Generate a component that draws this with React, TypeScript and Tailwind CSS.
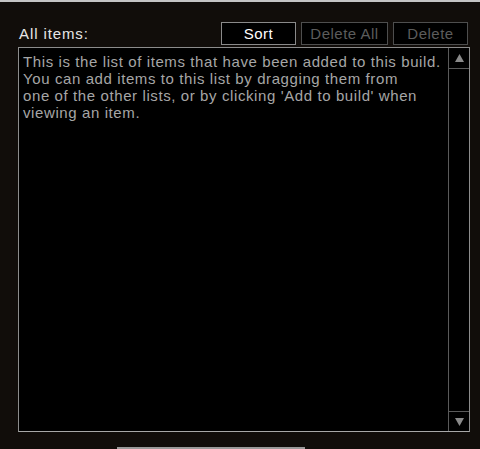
export default function App() {
  return (
    <div
      className="w-[480px] h-[449px] bg-[#110d0a] overflow-hidden flex flex-col"
      style={{ fontFamily: '"Liberation Sans", Arial, sans-serif' }}
    >
      <div className="h-[2px] bg-[#c4c4c4]" />
      <div className="flex items-center h-[23px] mt-[20px] pl-[19px] pr-[12px]">
        <span className="text-[15px] text-[#e6e6e6] tracking-[0.9px] mt-[1px]">All items:</span>
        <div className="ml-auto flex gap-[5px]">
          <button className="w-[75px] h-[23px] bg-black border border-[#8a8a8a] text-[15px] text-white tracking-[0.5px]">
            Sort
          </button>
          <button className="w-[87px] h-[23px] bg-black border border-[#4e4e4e] text-[15px] text-[#5c5c5c] tracking-[0.5px]">
            Delete All
          </button>
          <button className="w-[75px] h-[23px] bg-black border border-[#4e4e4e] text-[15px] text-[#5c5c5c] tracking-[0.5px]">
            Delete
          </button>
        </div>
      </div>
      <div className="ml-[18px] mt-[2px] w-[452px] h-[386px] bg-black border border-[#8c8c8c] border-b-[#a8a8a8] flex">
        <div className="flex-1 pl-[4px] pt-[5px] text-[15px] leading-[17px] text-[#a6a6a6] tracking-[0.6px] whitespace-nowrap">
          This is the list of items that have been added to this build.
          <br />
          You can add items to this list by dragging them from
          <br />
          one of the other lists, or by clicking 'Add to build' when
          <br />
          viewing an item.
        </div>
        <div className="w-[21px] border-l border-[#5a5a5a] flex flex-col justify-between">
          <div className="h-[21px] border-b border-[#5a5a5a] flex items-center justify-center">
            <svg width="9" height="8" viewBox="0 0 9 8">
              <path d="M4.5 0 L9 8 L0 8 Z" fill="#8a8a8a" />
            </svg>
          </div>
          <div className="h-[20px] border-t border-[#5a5a5a] flex items-center justify-center">
            <svg width="9" height="8" viewBox="0 0 9 8">
              <path d="M0 0 L9 0 L4.5 8 Z" fill="#8a8a8a" />
            </svg>
          </div>
        </div>
      </div>
      <div className="mt-[15px] ml-[117px] w-[188px] h-[2px] bg-[#9a9a9a]" />
    </div>
  );
}
